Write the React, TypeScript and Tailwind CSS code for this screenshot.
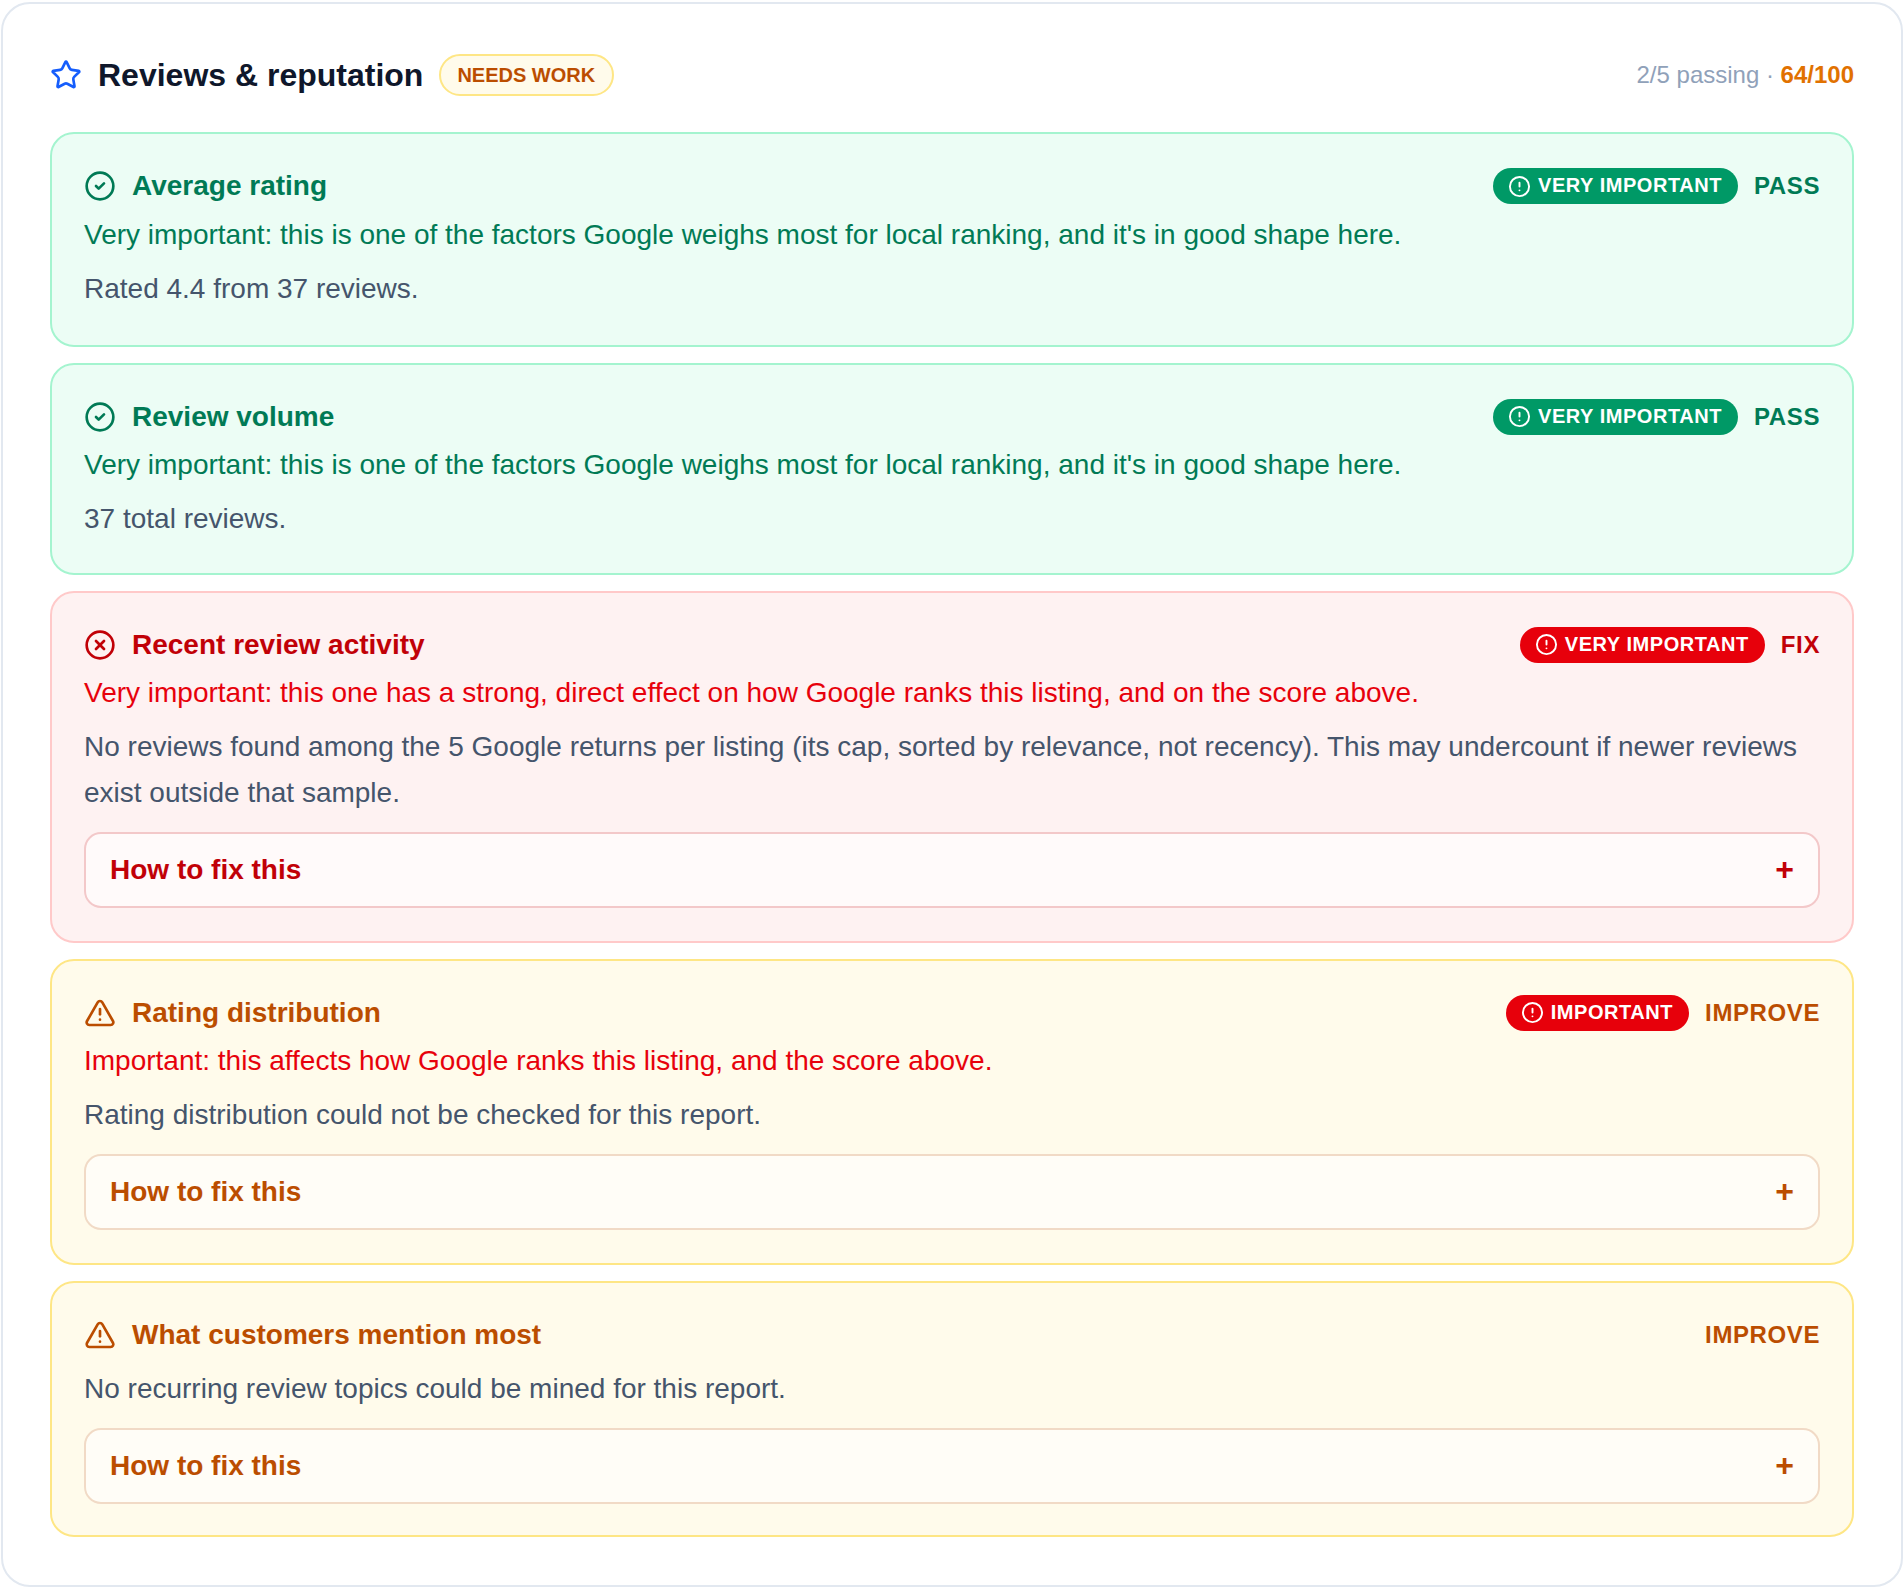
import { CircleAlert, CircleCheck, CircleX, Star, TriangleAlert } from 'lucide-react';

type Tone = 'pass' | 'fix' | 'improve';

type Check = {
  title: string;
  tone: Tone;
  badge?: string;
  note?: string;
  detail: string;
  fix?: boolean;
  bottom: string;
};

const toneStyles = {
  pass: {
    card: 'border-emerald-200 bg-emerald-50',
    title: 'text-emerald-700',
    pill: 'bg-emerald-600',
    note: 'text-emerald-700',
    box: 'border-emerald-700/20',
    status: 'PASS',
    Icon: CircleCheck,
  },
  fix: {
    card: 'border-red-200 bg-red-50',
    title: 'text-red-700',
    pill: 'bg-red-600',
    note: 'text-red-600',
    box: 'border-red-700/20',
    status: 'FIX',
    Icon: CircleX,
  },
  improve: {
    card: 'border-amber-200 bg-amber-50',
    title: 'text-amber-700',
    pill: 'bg-red-600',
    note: 'text-red-600',
    box: 'border-amber-700/20',
    status: 'IMPROVE',
    Icon: TriangleAlert,
  },
};

const goodShape =
  "Very important: this is one of the factors Google weighs most for local ranking, and it's in good shape here.";

const checks: Check[] = [
  {
    title: 'Average rating',
    tone: 'pass',
    badge: 'VERY IMPORTANT',
    note: goodShape,
    detail: 'Rated 4.4 from 37 reviews.',
    bottom: 'pb-[33px]',
  },
  {
    title: 'Review volume',
    tone: 'pass',
    badge: 'VERY IMPORTANT',
    note: goodShape,
    detail: '37 total reviews.',
    bottom: 'pb-[30.5px]',
  },
  {
    title: 'Recent review activity',
    tone: 'fix',
    badge: 'VERY IMPORTANT',
    note: 'Very important: this one has a strong, direct effect on how Google ranks this listing, and on the score above.',
    detail:
      'No reviews found among the 5 Google returns per listing (its cap, sorted by relevance, not recency). This may undercount if newer reviews exist outside that sample.',
    fix: true,
    bottom: 'pb-[32.5px]',
  },
  {
    title: 'Rating distribution',
    tone: 'improve',
    badge: 'IMPORTANT',
    note: 'Important: this affects how Google ranks this listing, and the score above.',
    detail: 'Rating distribution could not be checked for this report.',
    fix: true,
    bottom: 'pb-[33px]',
  },
  {
    title: 'What customers mention most',
    tone: 'improve',
    detail: 'No recurring review topics could be mined for this report.',
    fix: true,
    bottom: 'pb-[30.5px]',
  },
];

function CheckCard({ check }: { check: Check }) {
  const style = toneStyles[check.tone];
  const Icon = style.Icon;

  return (
    <div className={`rounded-[24px] border-2 px-[32px] pt-[33px] ${check.bottom} ${style.card}`}>
      <div className="flex h-[38px] items-center justify-between">
        <div className={`flex items-center gap-[16px] ${style.title}`}>
          <Icon size={32} strokeWidth={2} />
          <h3 className="text-[28px] leading-[38px] font-bold">{check.title}</h3>
        </div>
        <div className="flex items-center gap-[16px]">
          {check.badge && (
            <span
              className={`flex h-[36px] items-center gap-[7px] rounded-full pr-[16px] pl-[15px] text-[20px] font-bold tracking-[0.55px] text-white ${style.pill}`}
            >
              <CircleAlert size={23} strokeWidth={2} />
              <span className="pb-[2px]">{check.badge}</span>
            </span>
          )}
          <span className={`text-[24px] font-bold tracking-[0.6px] ${style.title}`}>{style.status}</span>
        </div>
      </div>
      {check.note && <p className={`mt-[10.5px] text-[28px] leading-[38px] ${style.note}`}>{check.note}</p>}
      <p className="mt-[12px] text-[28px] leading-[46px] text-slate-600">{check.detail}</p>
      {check.fix && (
        <div
          className={`mt-[16px] flex h-[76px] items-center justify-between rounded-[17px] border-2 bg-white/60 pr-[24px] pl-[24px] ${style.box} ${style.title}`}
        >
          <span className="text-[28px] font-bold">How to fix this</span>
          <span className="pb-[2px] text-[32px] font-bold">+</span>
        </div>
      )}
    </div>
  );
}

export default function App() {
  return (
    <div className="bg-white pt-[2px] pr-[1px] pb-[3px] pl-[1px] font-['Liberation_Sans',sans-serif]">
      <div className="rounded-[29px] border-2 border-slate-200 bg-white px-[47px] pt-[50px] pb-[48px]">
        <div className="mb-[36px] flex h-[42px] items-center justify-between">
          <div className="flex items-center gap-[16px]">
            <Star size={32} strokeWidth={2} className="text-blue-600" />
            <h2 className="text-[32px] font-bold text-slate-900">Reviews &amp; reputation</h2>
            <span className="flex h-[42px] items-center rounded-full border-2 border-amber-200 bg-amber-50 pr-[17px] pl-[16px] text-[20px] font-bold text-amber-700">
              NEEDS WORK
            </span>
          </div>
          <div className="text-[24px] text-slate-400">
            2/5 passing · <span className="font-bold text-amber-600">64/100</span>
          </div>
        </div>
        <div className="flex flex-col gap-[16px]">
          {checks.map((check) => (
            <CheckCard key={check.title} check={check} />
          ))}
        </div>
      </div>
    </div>
  );
}
